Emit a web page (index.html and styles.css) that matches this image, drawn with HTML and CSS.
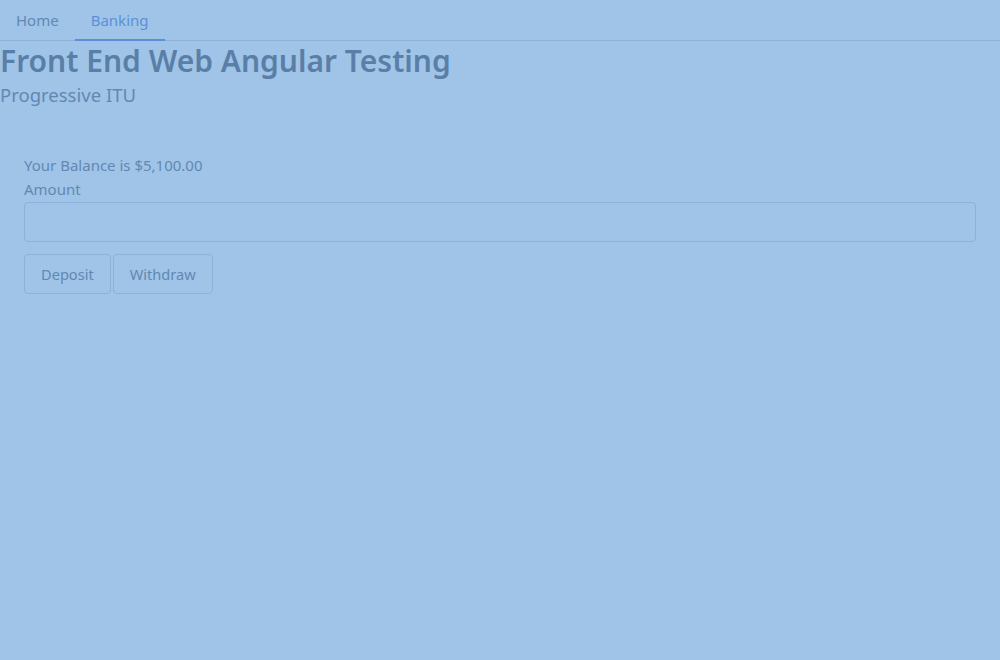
FILE: index.html
```html
<!DOCTYPE html>
<html>
<head>
<meta charset="utf-8">
<link rel="stylesheet" href="styles.css">
</head>
<body>
<nav class="tabs">
  <a class="tab">Home</a>
  <a class="tab active">Banking</a>
</nav>
<header class="head">
  <h1 class="title">Front End Web Angular Testing</h1>
  <div class="subtitle">Progressive ITU</div>
</header>
<main class="bank">
  <div class="balance">Your Balance is $5,100.00</div>
  <label class="label">Amount</label>
  <div class="input"></div>
  <div class="actions">
    <button class="btn">Deposit</button>
    <button class="btn">Withdraw</button>
  </div>
</main>
</body>
</html>
```
FILE: styles.css
```css
html, body {
  margin: 0;
  padding: 0;
  background: #9fc4e8;
  font-family: "Noto Sans", "Open Sans", sans-serif;
  color: #5a7fa8;
}
.tabs {
  display: flex;
  border-bottom: 1px solid #8db1d8;
  box-sizing: border-box;
  height: 41px;
}
.tab {
  display: block;
  padding: 0 16px;
  line-height: 40px;
  font-size: 15px;
  color: #6188b3;
  box-sizing: border-box;
}
.tab.active {
  color: #5c90d6;
  border-bottom: 2px solid #5c90d6;
  margin-bottom: -1px;
}
.title {
  margin: 0;
  font-size: 30px;
  font-weight: 600;
  line-height: 40px;
  color: #5a7fa6;
}
.subtitle {
  font-size: 18.5px;
  line-height: 28px;
  margin-top: 0;
  color: #6288b2;
}
.bank {
  padding: 44px 24px 0 24px;
}
.balance {
  font-size: 15px;
  line-height: 24px;
  color: #6288b2;
}
.label {
  display: block;
  font-size: 15px;
  line-height: 25px;
  color: #6288b2;
}
.input {
  height: 40px;
  border: 1px solid #8db1d8;
  border-radius: 4px;
  box-sizing: border-box;
}
.actions {
  display: flex;
  gap: 2px;
  margin-top: 12px;
}
.btn {
  height: 40px;
  padding: 0 16px;
  background: transparent;
  border: 1px solid #8db1d8;
  border-radius: 4px;
  font-family: inherit;
  font-size: 14.6px;
  color: #6288b2;
}
```
